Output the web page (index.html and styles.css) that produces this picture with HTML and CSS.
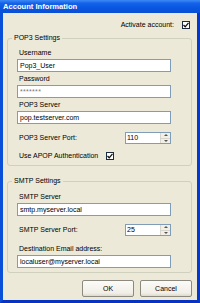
FILE: index.html
```html
<!DOCTYPE html>
<html lang="en">
<head>
  <meta charset="UTF-8" />
  <title>Account Information</title>
  <link rel="stylesheet" href="styles.css">
</head>
<body>
  <div class="window">
    <div class="titlebar">Account Information</div>

    <div class="client">
      <!-- attivazione account -->
      <div class="activate-row">
        <span>Activate account:</span>
        <span class="check">
          <svg width="6" height="6" viewBox="0 0 6 6"><polyline points="0.5,3 2.2,4.8 5.5,0.8" fill="none" stroke="#111" stroke-width="1.3"/></svg>
        </span>
      </div>

      <!-- POP3 -->
      <fieldset class="group">
        <legend>POP3 Settings</legend>
        <div class="field">
          <label>Username</label>
          <div class="textbox">Pop3_User</div>
        </div>
        <div class="field">
          <label>Password</label>
          <div class="textbox password">*******</div>
        </div>
        <div class="field">
          <label>POP3 Server</label>
          <div class="textbox">pop.testserver.com</div>
        </div>
        <div class="inline-row port-row">
          <label>POP3 Server Port:</label>
          <div class="spinner">
            <span class="spin-value">110</span>
            <span class="spin-btns">
              <span class="spin-up"></span>
              <span class="spin-down"></span>
            </span>
          </div>
        </div>
        <div class="inline-row apop-row">
          <label>Use APOP Authentication</label>
          <span class="check">
            <svg width="6" height="6" viewBox="0 0 6 6"><polyline points="0.5,3 2.2,4.8 5.5,0.8" fill="none" stroke="#111" stroke-width="1.3"/></svg>
          </span>
        </div>
      </fieldset>

      <!-- SMTP -->
      <fieldset class="group smtp">
        <legend>SMTP Settings</legend>
        <div class="field">
          <label>SMTP Server</label>
          <div class="textbox">smtp.myserver.local</div>
        </div>
        <div class="inline-row port-row">
          <label>SMTP Server Port:</label>
          <div class="spinner">
            <span class="spin-value">25</span>
            <span class="spin-btns">
              <span class="spin-up"></span>
              <span class="spin-down"></span>
            </span>
          </div>
        </div>
        <div class="field dest">
          <label>Destination Email address:</label>
          <div class="textbox">localuser@myserver.local</div>
        </div>
      </fieldset>

      <div class="buttons">
        <button class="btn">OK</button>
        <button class="btn">Cancel</button>
      </div>
    </div>
  </div>
</body>
</html>
```

FILE: styles.css
```css
body {
  margin: 0;
  font-family: "Liberation Sans", Arial, sans-serif;
  font-size: 7px;
  color: #000;
}

.window {
  width: 200px;
  height: 303px;
  box-sizing: border-box;
  display: flex;
  flex-direction: column;
  border-left: 3px solid #0a4fd8;
  border-right: 3px solid #0838c8;
  border-bottom: 3px solid #0833c0;
  background: #ece9d8;
}

.titlebar {
  height: 13px;
  margin: 0 -3px;
  padding-left: 3px;
  background: linear-gradient(to bottom, #3d8bf5 0%, #1462ea 25%, #0856e0 65%, #0a4ed3 100%);
  color: #fff;
  font-weight: bold;
  font-size: 7.6px;
  line-height: 13px;
  flex: none;
}

.client {
  flex: 1;
  padding: 7px 5px 0 4px;
  display: flex;
  flex-direction: column;
}

.activate-row {
  display: flex;
  justify-content: flex-end;
  align-items: center;
  gap: 8px;
  height: 10px;
  line-height: 10px;
  padding-right: 2px;
}

.check {
  width: 8px;
  height: 8px;
  box-sizing: border-box;
  border: 1px solid #1c2c40;
  background: #fff;
  display: flex;
  align-items: center;
  justify-content: center;
}

.check svg { display: block; }

/* GROUP BOX */
.group {
  margin: 3px 0 0 0;
  padding: 5px 9px 4px 4px;
  min-width: 0;
  border: 1px solid #d0d0bf;
  border-radius: 3px;
}

.group.smtp {
  margin-top: 10px;
  padding-top: 6px;
}

.group legend {
  padding: 0 2px;
  line-height: 10px;
  height: 10px;
}

.field {
  margin-left: 5px;
  margin-top: 2px;
  display: flex;
  flex-direction: column;
}

.field:first-of-type { margin-top: 0; }
.field.dest { margin-top: 8px; }

.field label {
  line-height: 10px;
  height: 10px;
  padding-left: 2px;
}

.textbox {
  margin-top: 1px;
  width: 154px;
  height: 13px;
  box-sizing: border-box;
  border: 1px solid #7f9db9;
  background: #fff;
  line-height: 11px;
  padding-left: 2px;
}

.textbox.password {
  color: #777;
  letter-spacing: 0.3px;
}

.inline-row {
  margin-left: 5px;
  width: 154px;
  display: flex;
  align-items: center;
  line-height: 10px;
}

.inline-row label { padding-left: 2px; }

.port-row {
  margin-top: 8px;
  justify-content: space-between;
  height: 12px;
}

.apop-row {
  margin-top: 7px;
  gap: 8px;
  height: 10px;
}

.spinner {
  width: 46px;
  height: 12px;
  box-sizing: border-box;
  border: 1px solid #7f9db9;
  background: #fff;
  display: flex;
}

.spin-value {
  flex: 1;
  line-height: 10px;
  padding-left: 1px;
}

.spin-btns {
  width: 9px;
  display: flex;
  flex-direction: column;
  border-left: 1px solid #d8d6cc;
}

.spin-up, .spin-down {
  flex: 1;
  background: #f1efe6;
  display: flex;
  align-items: center;
  justify-content: center;
}

.spin-up { border-bottom: 1px solid #d8d6cc; }

.spin-up::after, .spin-down::after {
  content: "";
  width: 0;
  height: 0;
  border-left: 2px solid transparent;
  border-right: 2px solid transparent;
}

.spin-up::after { border-bottom: 2px solid #555; }
.spin-down::after { border-top: 2px solid #555; }

/* PULSANTI */
.buttons {
  margin-top: 7px;
  display: flex;
  justify-content: flex-end;
  gap: 6px;
}

.btn {
  width: 52px;
  height: 17px;
  padding: 0;
  font-family: inherit;
  font-size: 7px;
  color: #000;
  background: linear-gradient(to bottom, #fbfbf9, #f1efe7 80%, #dcd9cc);
  border: 1px solid #8c8a7e;
  border-radius: 2px;
}
```
